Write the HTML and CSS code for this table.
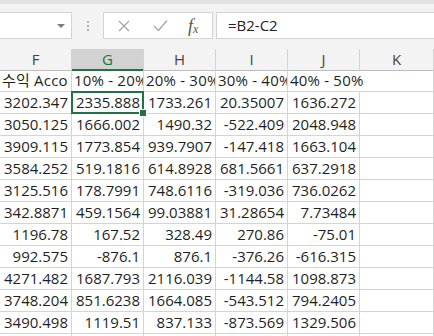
FILE: index.html
```html
<!DOCTYPE html>
<html>
<head>
<meta charset="utf-8">
<link rel="stylesheet" href="styles.css">
</head>
<body>
<div class="app">
  <div class="topstrip"></div>
  <div class="toolbar">
    <div class="namebox"><span class="caret"></span></div>
    <div class="grip"><i></i><i></i><i></i></div>
    <div class="fbtns">
      <svg class="ic" width="12" height="12" viewBox="0 0 12 12"><path d="M1 1L11 11M11 1L1 11" stroke="#a6a6a6" stroke-width="1.3" fill="none"/></svg>
      <svg class="ic" width="15" height="13" viewBox="0 0 15 13"><path d="M1 7L5.5 11.5L14 1.5" stroke="#a6a6a6" stroke-width="1.3" fill="none"/></svg>
      <span class="fx">f<sub>x</sub></span>
    </div>
    <div class="finput">=B2-C2</div>
  </div>
  <div class="sheet">
    <div class="row hdr">
      <div class="h">F</div><div class="h sel">G</div><div class="h">H</div><div class="h">I</div><div class="h">J</div><div class="h">K</div>
    </div>
    <div class="row">
      <div class="c t">수익 Acco</div><div class="c t">10% - 20%</div><div class="c t">20% - 30%</div><div class="c t">30% - 40%</div><div class="c t ov">40% - 50%</div><div class="c nl"></div>
    </div>
    <div class="row"><div class="c">3202.347</div><div class="c active">2335.888</div><div class="c">1733.261</div><div class="c">20.35007</div><div class="c">1636.272</div><div class="c"></div></div>
    <div class="row"><div class="c">3050.125</div><div class="c">1666.002</div><div class="c">1490.32</div><div class="c">-522.409</div><div class="c">2048.948</div><div class="c"></div></div>
    <div class="row"><div class="c">3909.115</div><div class="c">1773.854</div><div class="c">939.7907</div><div class="c">-147.418</div><div class="c">1663.104</div><div class="c"></div></div>
    <div class="row"><div class="c">3584.252</div><div class="c">519.1816</div><div class="c">614.8928</div><div class="c">681.5661</div><div class="c">637.2918</div><div class="c"></div></div>
    <div class="row"><div class="c">3125.516</div><div class="c">178.7991</div><div class="c">748.6116</div><div class="c">-319.036</div><div class="c">736.0262</div><div class="c"></div></div>
    <div class="row"><div class="c">342.8871</div><div class="c">459.1564</div><div class="c">99.03881</div><div class="c">31.28654</div><div class="c">7.73484</div><div class="c"></div></div>
    <div class="row"><div class="c">1196.78</div><div class="c">167.52</div><div class="c">328.49</div><div class="c">270.86</div><div class="c">-75.01</div><div class="c"></div></div>
    <div class="row"><div class="c">992.575</div><div class="c">-876.1</div><div class="c">876.1</div><div class="c">-376.26</div><div class="c">-616.315</div><div class="c"></div></div>
    <div class="row"><div class="c">4271.482</div><div class="c">1687.793</div><div class="c">2116.039</div><div class="c">-1144.58</div><div class="c">1098.873</div><div class="c"></div></div>
    <div class="row"><div class="c">3748.204</div><div class="c">851.6238</div><div class="c">1664.085</div><div class="c">-543.512</div><div class="c">794.2405</div><div class="c"></div></div>
    <div class="row"><div class="c">3490.498</div><div class="c">1119.51</div><div class="c">837.133</div><div class="c">-873.569</div><div class="c">1329.506</div><div class="c"></div></div>
    <div class="row"><div class="c"></div><div class="c"></div><div class="c"></div><div class="c"></div><div class="c"></div><div class="c"></div></div>
  </div>
</div>
</body>
</html>
```

FILE: styles.css
```css
* { box-sizing: border-box; }
html, body { margin: 0; padding: 0; }
body {
  width: 434px;
  height: 336px;
  overflow: hidden;
  background: #fff;
  font-family: "Open Sans", "Noto Sans CJK KR", sans-serif;
  font-size: 15px;
  color: #1f1f1f;
}
.app { width: 434px; }
.topstrip { height: 4px; background: #e3e3e3; }
.toolbar {
  height: 45px;
  background: #f3f3f3;
  display: flex;
  align-items: flex-start;
  padding-top: 8px;
}
.namebox {
  width: 72px;
  height: 27px;
  background: #fff;
  border: 1px solid #d4d4d4;
  border-left: none;
  display: flex;
  align-items: center;
  justify-content: flex-end;
  padding-right: 6px;
}
.caret {
  width: 0; height: 0;
  border-left: 4px solid transparent;
  border-right: 4px solid transparent;
  border-top: 4px solid #7a7a7a;
}
.grip {
  width: 31px;
  height: 27px;
  display: flex;
  flex-direction: column;
  align-items: center;
  justify-content: center;
  gap: 2px;
}
.grip i { width: 2px; height: 2px; background: #b4b4b4; display: block; }
.fbtns {
  width: 110px;
  height: 27px;
  background: #fff;
  border: 1px solid #d4d4d4;
  display: flex;
  align-items: center;
  padding-left: 14px;
}
.fbtns .ic:nth-child(1) { margin-right: 23px; }
.fbtns .ic:nth-child(2) { margin-right: 20px; }
.fx {
  font-family: "Liberation Serif", serif;
  font-style: italic;
  font-size: 18px;
  color: #555;
  line-height: 1;
}
.fx sub { font-size: 12px; vertical-align: -1px; }
.finput {
  flex: 1;
  margin-left: 3px;
  height: 27px;
  background: #fff;
  border: 1px solid #d4d4d4;
  border-right: none;
  padding-left: 11px;
  line-height: 25px;
  font-size: 15px;
  color: #222;
}
.sheet { width: 434px; }
.row {
  display: grid;
  grid-template-columns: 72px 72px 72px 72px 72px 1fr;
  height: 22px;
}
.row.hdr { height: 21px; background: #f3f3f3; }
.h {
  text-align: center;
  color: #444;
  border-right: 1px solid #d4d4d4;
  border-bottom: 1px solid #bdbdbd;
  line-height: 20px;
  font-size: 15px;
}
.h.sel {
  background: #d2d2d2;
  color: #217346;
  border-bottom: 2px solid #217346;
}
.c {
  border-right: 1px solid #d4d4d4;
  border-bottom: 1px solid #d4d4d4;
  text-align: right;
  padding-right: 3px;
  line-height: 21px;
  white-space: nowrap;
  overflow: hidden;
  position: relative;
}
.c.t { text-align: left; padding-left: 2px; padding-right: 0; letter-spacing: 0.2px; }
.c.ov { overflow: visible; border-right-color: transparent; z-index: 1; }
.c.active::after {
  content: "";
  position: absolute;
  left: -1px; top: -1px; right: -1px; bottom: -1px;
  border: 2px solid #217346;
}
.c.active { overflow: visible; }
.c.active::before {
  content: "";
  position: absolute;
  right: -4px; bottom: -4px;
  width: 6px; height: 6px;
  background: #217346;
  border: 1px solid #fff;
  z-index: 2;
}
```
